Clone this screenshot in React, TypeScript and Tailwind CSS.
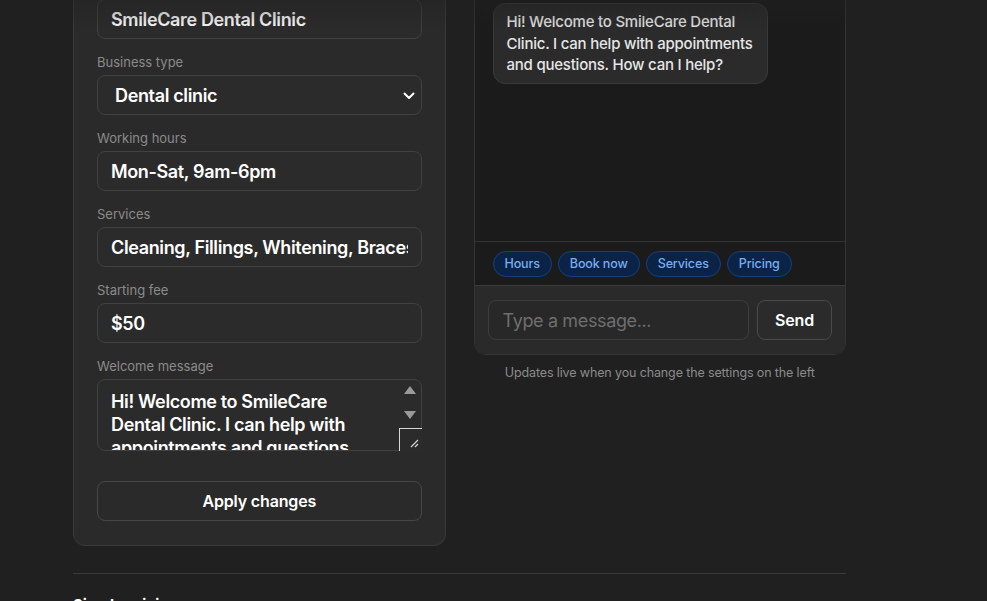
import { useState } from 'react';

const FONT = { fontFamily: 'Inter, "Noto Sans", sans-serif' };

const CHIPS = ['Hours', 'Book now', 'Services', 'Pricing'];

function Field({ label, children }: { label: string; children: React.ReactNode }) {
  return (
    <div className="flex flex-col">
      <label className="mb-1 text-[13px] leading-[18px] text-[#8b8b8b]">{label}</label>
      {children}
    </div>
  );
}

const inputCls =
  'h-10 w-full rounded-lg border border-[#414141] bg-[#2b2b2b] px-[13px] text-[18px] font-semibold tracking-[-0.02em] text-white outline-none';

export default function App() {
  const [name, setName] = useState('SmileCare Dental Clinic');
  const [hours, setHours] = useState('Mon-Sat, 9am-6pm');
  const [services, setServices] = useState('Cleaning, Fillings, Whitening, Braces');
  const [fee, setFee] = useState('$50');
  const [welcome, setWelcome] = useState(
    'Hi! Welcome to SmileCare Dental Clinic. I can help with appointments and questions. How can I help?'
  );

  return (
    <div className="relative min-h-[601px] overflow-hidden bg-[#202020] text-white" style={FONT}>
      <div className="pointer-events-none absolute inset-x-0 top-0 z-10 h-[30px] bg-gradient-to-b from-[#202020]/45 to-transparent" />

      <div className="ml-[73px] w-[773px] -mt-[48px]">
        <div className="grid grid-cols-2 items-start gap-7">
          {/* SETTINGS */}
          <div className="flex flex-col gap-[14px] rounded-xl border border-[#3a3a3a] bg-[#2a2a2a] px-[23px] py-6">
            <Field label="Business name">
              <input className={inputCls} value={name} onChange={(e) => setName(e.target.value)} />
            </Field>
            <Field label="Business type">
              <div className="relative">
                <select className={inputCls + ' appearance-none pl-[17px]'} defaultValue="dental">
                  <option value="dental">Dental clinic</option>
                  <option value="salon">Hair salon</option>
                  <option value="restaurant">Restaurant</option>
                </select>
                <svg
                  className="pointer-events-none absolute right-[7px] top-[17px]"
                  width="12"
                  height="8"
                  viewBox="0 0 12 8"
                  fill="none"
                >
                  <path d="M1.5 1.5 6 6l4.5-4.5" stroke="white" strokeWidth="2" strokeLinecap="round" strokeLinejoin="round" />
                </svg>
              </div>
            </Field>
            <Field label="Working hours">
              <input className={inputCls} value={hours} onChange={(e) => setHours(e.target.value)} />
            </Field>
            <Field label="Services">
              <input className={inputCls} value={services} onChange={(e) => setServices(e.target.value)} />
            </Field>
            <Field label="Starting fee">
              <input className={inputCls} value={fee} onChange={(e) => setFee(e.target.value)} />
            </Field>
            <Field label="Welcome message">
              <div className="relative">
                <textarea
                  className="block h-[72px] w-full resize-none overflow-hidden rounded-lg border border-[#414141] bg-[#2b2b2b] pt-[10px] pb-[8px] pl-[13px] pr-[40px] text-[18px] font-semibold leading-[23px] tracking-[-0.02em] text-white outline-none"
                  value={welcome}
                  onChange={(e) => setWelcome(e.target.value)}
                />
                {/* scrollbar arrows + resize corner */}
                <div className="pointer-events-none absolute right-[6px] top-[7px] h-0 w-0 border-x-[6px] border-b-[8px] border-x-transparent border-b-[#9a9a9a]" />
                <div className="pointer-events-none absolute right-[6px] top-[32px] h-0 w-0 border-x-[6px] border-t-[8px] border-x-transparent border-t-[#9a9a9a]" />
                <div className="pointer-events-none absolute bottom-0 right-0 h-[23px] w-[23px] border-l border-t border-[#d8d8d8] bg-[#2b2b2b]">
                  <svg className="absolute bottom-[3px] right-[3px]" width="9" height="9" viewBox="0 0 9 9" fill="none">
                    <path d="M8 1 1 8M8 5 5 8" stroke="#cfcfcf" strokeWidth="1.3" />
                  </svg>
                </div>
              </div>
            </Field>
            <button className="mt-4 h-10 w-full rounded-lg border border-[#474747] text-[16px] font-semibold tracking-[-0.01em] text-white">
              Apply changes
            </button>
          </div>

          {/* PREVIEW */}
          <div className="flex flex-col items-center">
            <div className="w-full overflow-hidden rounded-xl border border-[#353535] bg-[#1b1b1b]">
              <div className="h-[288px] px-[18px] pt-[50px]">
                <div className="w-[275px] rounded-xl border border-[#3a3a3a] bg-[#2b2b2b] px-[13px] py-[7px] text-[15px] font-medium leading-[21.5px] tracking-[-0.015em] text-[#e6e6e6]">
                  {welcome}
                </div>
              </div>
              <div className="flex gap-[6px] border-t border-[#333] px-[18px] pt-[9px] pb-[8px]">
                {CHIPS.map((c) => (
                  <button
                    key={c}
                    className="h-[26px] rounded-full border border-[#18407a] bg-[#0b2346] px-[11px] text-[12.5px] font-medium tracking-[-0.01em] text-[#79adf0]"
                  >
                    {c}
                  </button>
                ))}
              </div>
              <div className="flex gap-2 border-t border-[#3a3a3a] bg-[#2a2a2a] px-[13px] py-[14px]">
                <input
                  className="h-10 min-w-0 flex-1 rounded-lg border border-[#3d3d3d] bg-[#282828] px-[14px] text-[18px] tracking-[-0.02em] text-white outline-none placeholder:text-[#6e6e6e]"
                  placeholder="Type a message..."
                />
                <button className="h-10 w-[75px] shrink-0 rounded-lg border border-[#4a4a4a] bg-[#2b2b2b] text-[16px] font-semibold tracking-[-0.01em] text-white">
                  Send
                </button>
              </div>
            </div>
            <p className="mt-[9px] text-[12.5px] tracking-[-0.01em] text-[#8b8b8b]">
              Updates live when you change the settings on the left
            </p>
          </div>
        </div>

        <div className="mt-[27px] border-t border-[#3a3a3a] pt-5">
          <h2 className="text-[15px] font-bold">Simple pricing</h2>
        </div>
      </div>
    </div>
  );
}
